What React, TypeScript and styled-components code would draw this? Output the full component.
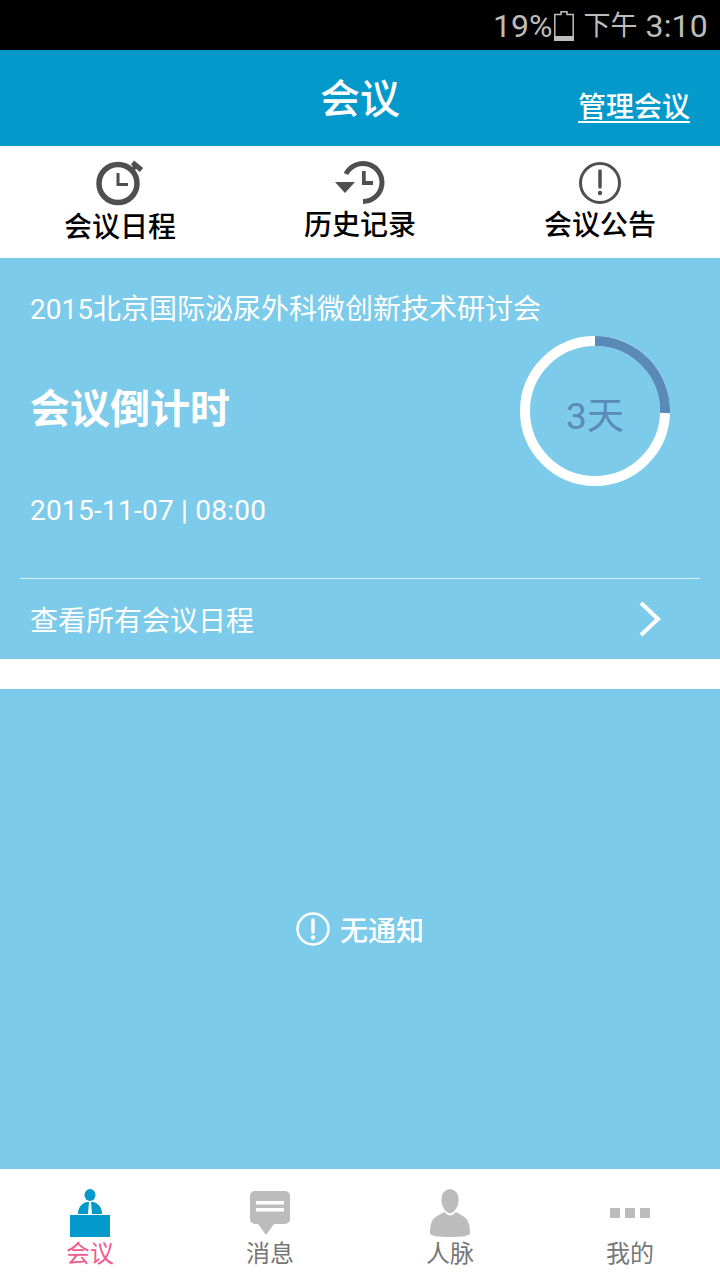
import React from "react";
import styled, { createGlobalStyle } from "styled-components";

const Global = createGlobalStyle`
  html, body { margin: 0; padding: 0; background: #fff; }
  * { box-sizing: border-box; }
`;

const Page = styled.div`
  width: 720px;
  height: 1280px;
  display: flex;
  flex-direction: column;
  overflow: hidden;
  background: #fff;
  font-family: Roboto, "Noto Sans CJK SC", sans-serif;
`;

const StatusBar = styled.div`
  height: 50px;
  background: #000;
  color: #bdbdbd;
  display: flex;
  align-items: center;
  justify-content: flex-end;
  padding: 2px 12px 0 0;
  font-size: 32px;
  line-height: 44px;
  font-weight: 400;
`;
const BatteryIcon = styled.svg`
  width: 20px;
  height: 30px;
  margin: 0 9px 0 2px;
  flex: none;
`;
const StatusCjk = styled.span`
  font-size: 27px;
  margin-right: 8px;
`;
const StatusTime = styled.span`
  letter-spacing: 0.2px;
`;

const Header = styled.header`
  height: 96px;
  background: #0399cb;
  color: #fff;
  display: grid;
  grid-template-columns: 1fr auto 1fr;
  align-items: center;
  padding: 0 30px;
`;
const HeaderTitle = styled.h1`
  grid-column: 2;
  margin: 4px 0 0;
  font-size: 40px;
  line-height: 56px;
  font-weight: 500;
`;
const HeaderLink = styled.a`
  justify-self: end;
  margin-top: 20px;
  font-size: 28px;
  line-height: 36px;
  font-weight: 500;
  text-decoration: underline;
  text-underline-offset: 4px;
  color: #fff;
`;

const Tabs = styled.nav`
  height: 112px;
  display: grid;
  grid-template-columns: repeat(3, 1fr);
`;
const Tab = styled.div<{ $top: number }>`
  display: flex;
  flex-direction: column;
  align-items: center;
  padding-top: ${(p) => p.$top}px;
`;
const TabIcon = styled.svg`
  width: 60px;
  height: 50px;
  flex: none;
`;
const TabLabel = styled.span`
  font-size: 28px;
  line-height: 36px;
  font-weight: 500;
  color: #000;
`;

const CountdownPanel = styled.section`
  height: 401px;
  background: #7dcbea;
  color: #fff;
  display: flex;
  flex-direction: column;
  margin-bottom: 30px;
`;
const MeetingName = styled.div`
  padding: 32px 30px 0;
  font-size: 28px;
  line-height: 40px;
  height: 78px;
`;
const CountdownBody = styled.div`
  height: 242px;
  display: flex;
  justify-content: space-between;
  padding: 0 50px 0 30px;
`;
const CountdownHeading = styled.h2`
  margin: 46px 0 0;
  font-size: 40px;
  line-height: 56px;
  font-weight: 700;
`;
const CountdownDate = styled.div`
  margin-top: 53px;
  font-size: 28px;
  line-height: 40px;
  letter-spacing: 0.25px;
`;
const Ring = styled.div`
  width: 150px;
  height: 150px;
  display: grid;
  place-items: center;
  position: relative;
`;
const RingSvg = styled.svg`
  position: absolute;
  inset: 0;
`;
const RingText = styled.span`
  margin-top: 12px;
  font-size: 37px;
  line-height: 44px;
  color: #5a8ab8;
  position: relative;
`;
const ScheduleLink = styled.div`
  margin: 0 20px;
  padding: 0 10px;
  height: 81px;
  border-top: 1px solid #d8eff9;
  display: flex;
  align-items: center;
  justify-content: space-between;
  font-size: 28px;
`;
const Chevron = styled.svg`
  width: 24px;
  height: 36px;
  flex: none;
  margin-right: 28px;
`;

const NoticePanel = styled.section`
  height: 480px;
  background: #7dcbea;
  color: #fff;
  display: flex;
  align-items: center;
  justify-content: center;
  gap: 10px;
  font-size: 28px;
  font-weight: 500;
`;
const NoticeIcon = styled.svg`
  width: 34px;
  height: 34px;
  flex: none;
`;

const BottomNav = styled.nav`
  height: 111px;
  display: grid;
  grid-template-columns: repeat(4, 1fr);
`;
const NavItem = styled.div`
  display: flex;
  flex-direction: column;
  align-items: center;
  padding-top: 17px;
`;
const NavIcon = styled.svg`
  width: 60px;
  height: 52px;
  flex: none;
`;
const NavLabel = styled.span<{ $active?: boolean }>`
  font-size: 24px;
  line-height: 32px;
  color: ${(p) => (p.$active ? "#ee5b8c" : "#777777")};
`;

export default function App() {
  return (
    <Page>
      <Global />
      <StatusBar>
        <span>19%</span>
        <BatteryIcon viewBox="0 0 20 30">
          <path d="M7 0.8H13V3.5H19.2V29.2H0.8V3.5H7Z" fill="none" stroke="#bdbdbd" strokeWidth="1.5" />
          <rect x="0" y="25" width="20" height="5" fill="#bdbdbd" />
        </BatteryIcon>
        <StatusCjk>下午</StatusCjk>
        <StatusTime>3:10</StatusTime>
      </StatusBar>

      <Header>
        <HeaderTitle>会议</HeaderTitle>
        <HeaderLink>管理会议</HeaderLink>
      </Header>

      <Tabs>
        <Tab $top={14}>
          <TabIcon viewBox="0 0 60 50">
            <circle cx="28" cy="23.500" r="19" fill="none" stroke="#4f4f4f" strokeWidth="5.500" />
            <path d="M28 13V24.500H38" fill="none" stroke="#4f4f4f" strokeWidth="3" />
            <path d="M42 10L46.500 5.500" fill="none" stroke="#4f4f4f" strokeWidth="4" />
            <path d="M42.500 2.500L51.500 10" fill="none" stroke="#4f4f4f" strokeWidth="5" />
          </TabIcon>
          <TabLabel>会议日程</TabLabel>
        </Tab>
        <Tab $top={12}>
          <TabIcon viewBox="0 0 60 50">
            <path d="M33 43.500A19 19 0 1 0 16 16" fill="none" stroke="#4f4f4f" strokeWidth="5" />
            <path d="M5 24H25L15 35Z" fill="#4f4f4f" />
            <path d="M32 13H35.700V23H43V27H32Z" fill="#4f4f4f" />
          </TabIcon>
          <TabLabel>历史记录</TabLabel>
        </Tab>
        <Tab $top={12}>
          <TabIcon viewBox="0 0 60 50">
            <circle cx="30" cy="25" r="19.500" fill="none" stroke="#4f4f4f" strokeWidth="3" />
            <path d="M30 13V29" stroke="#4f4f4f" strokeWidth="3.500" strokeLinecap="round" />
            <circle cx="30" cy="35" r="2.200" fill="#4f4f4f" />
          </TabIcon>
          <TabLabel>会议公告</TabLabel>
        </Tab>
      </Tabs>

      <CountdownPanel>
        <MeetingName>2015北京国际泌尿外科微创新技术研讨会</MeetingName>
        <CountdownBody>
          <div>
            <CountdownHeading>会议倒计时</CountdownHeading>
            <CountdownDate>2015-11-07 | 08:00</CountdownDate>
          </div>
          <Ring>
            <RingSvg viewBox="0 0 150 150" width="150" height="150">
              <circle cx="75" cy="75" r="70" fill="none" stroke="#fff" strokeWidth="10" />
              <path d="M75 5A70 70 0 0 1 145 77" fill="none" stroke="#5a8ab8" strokeWidth="10" />
            </RingSvg>
            <RingText>3天</RingText>
          </Ring>
        </CountdownBody>
        <ScheduleLink>
          <span>查看所有会议日程</span>
          <Chevron viewBox="0 0 24 36">
            <path d="M3 2L20 18L3 34" fill="none" stroke="#fff" strokeWidth="4" />
          </Chevron>
        </ScheduleLink>
      </CountdownPanel>

      <NoticePanel>
        <NoticeIcon viewBox="0 0 34 34">
          <circle cx="17" cy="17" r="15.500" fill="none" stroke="#fff" strokeWidth="2.500" />
          <path d="M17 8V20" stroke="#fff" strokeWidth="3.500" strokeLinecap="round" />
          <circle cx="17" cy="25.500" r="2.200" fill="#fff" />
        </NoticeIcon>
        <span>无通知</span>
      </NoticePanel>

      <BottomNav>
        <NavItem>
          <NavIcon viewBox="0 0 60 52">
            <ellipse cx="30" cy="9" rx="5.500" ry="6" fill="#0399cb" />
            <path d="M18 28C18 21 22 17 27 16H33C38 17 42 21 42 28Z" fill="#0399cb" />
            <path d="M29 16H31L32 28H28Z" fill="#fff" />
            <rect x="10" y="29" width="40" height="22" fill="#0399cb" />
          </NavIcon>
          <NavLabel $active>会议</NavLabel>
        </NavItem>
        <NavItem>
          <NavIcon viewBox="0 0 60 52">
            <path d="M15 5H45A5 5 0 0 1 50 10V33A5 5 0 0 1 45 38H34L26 49L18 38H15A5 5 0 0 1 10 33V10A5 5 0 0 1 15 5Z" fill="#bcbcbc" />
            <rect x="16" y="15" width="28" height="3.500" fill="#fff" />
            <rect x="16" y="22" width="28" height="3.500" fill="#fff" />
          </NavIcon>
          <NavLabel>消息</NavLabel>
        </NavItem>
        <NavItem>
          <NavIcon viewBox="0 0 60 52">
            <path d="M30 3C36 4 39 8 38.500 15C38 21 35 26 30 27.500C25 26 22 21 21.500 15C21 8 24 4 30 3Z" fill="#bcbcbc" />
            <path d="M24.500 26Q30 33 36 26L43 30C48 33 50 38 50 47C50 50 42 51 30 51C18 51 10 50 10 47C10 38 12 33 17 30Z" fill="#bcbcbc" />
          </NavIcon>
          <NavLabel>人脉</NavLabel>
        </NavItem>
        <NavItem>
          <NavIcon viewBox="0 0 60 52">
            <rect x="10" y="22" width="10" height="10" fill="#bcbcbc" />
            <rect x="25" y="22" width="10" height="10" fill="#bcbcbc" />
            <rect x="40" y="22" width="10" height="10" fill="#bcbcbc" />
          </NavIcon>
          <NavLabel>我的</NavLabel>
        </NavItem>
      </BottomNav>
    </Page>
  );
}
